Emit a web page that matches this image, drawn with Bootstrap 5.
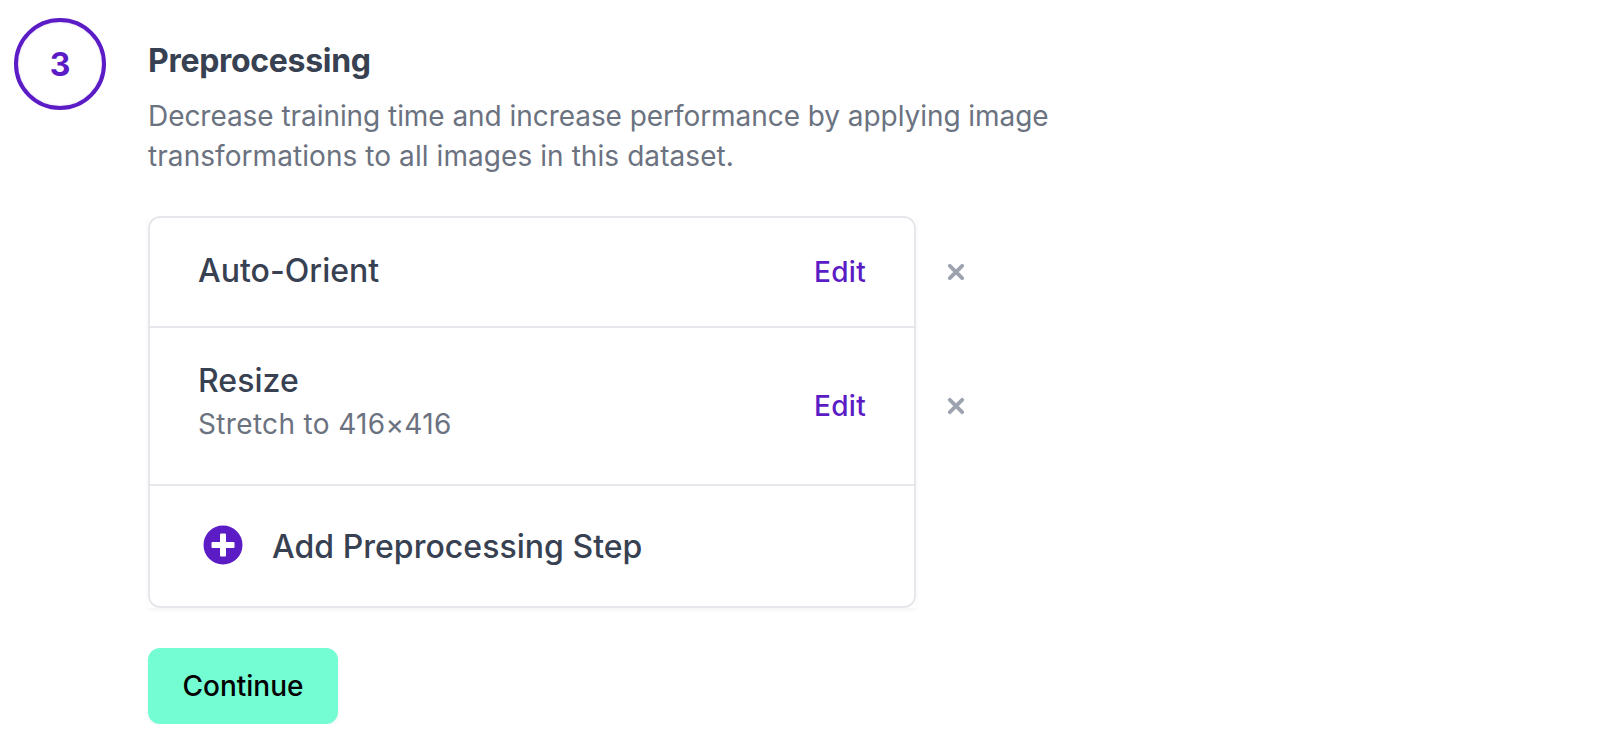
<!DOCTYPE html>
<html lang="en">
<head>
<meta charset="utf-8">
<title>Preprocessing</title>
<link href="https://cdn.jsdelivr.net/npm/bootstrap@5.3.0/dist/css/bootstrap.min.css" rel="stylesheet">
<style>
body{font-family:Inter,"Liberation Sans",sans-serif;background:#fff;color:#374151;overflow:hidden}
.wizard-step{padding:18px 0 0 14px}
.step-number{width:92px;height:92px;border:4px solid #5b1bc5;color:#5b1bc5;font-size:32px;font-weight:700;line-height:1;padding-top:2px;box-shadow:inset 0 0 2px rgba(91,27,197,.25)}
.step-body{width:920px;margin-left:42px;padding-top:23px}
.step-title{font-size:32px;line-height:40px;font-weight:700;margin:0;letter-spacing:-.3px}
.step-help{font-size:28px;line-height:40px;color:#6b7280;margin:15px 0 40px}
.help-first{letter-spacing:-.055px}
.help-second{letter-spacing:.07px}
.step-panel{width:768px;box-shadow:0 2px 4px rgba(0,0,0,.05)}
.step-list{border:2px solid #e5e7eb;border-radius:12px}
.step-row{padding:0 48px;position:relative}
.step-row + .step-row{border-top:2px solid #e5e7eb}
.row-orient{height:108px;padding-bottom:3px}
.row-resize{height:158px}
.row-add{height:122px}
.row-name{font-size:32px;line-height:40px;font-weight:500;letter-spacing:.03px}
.row-add .row-name{padding-top:2px}
.resize-text{padding-bottom:7px}
.row-detail{font-size:28px;line-height:40px;color:#6b7280;letter-spacing:.34px;margin-top:3px}
.edit-link{font-size:28px;line-height:40px;font-weight:500;color:#5b1bc5;text-decoration:none;letter-spacing:.3px}
.row-orient .edit-link{padding-top:2px}
.row-resize .edit-link{padding-bottom:1px}
.remove-btn{position:absolute;left:794px;top:50%;transform:translateY(-50%);line-height:0}
.remove-btn svg{display:block}
.add-icon{margin-bottom:2px}
.continue-btn{width:190px;height:76px;margin-top:40px;border:0;border-radius:12px;background:#74fcd3;color:#000;font-size:28px;font-weight:500;box-shadow:0 2px 4px rgba(0,0,0,.05)}
</style>
</head>
<body>
<main class="wizard-step d-flex align-items-start">
<div class="step-number rounded-circle d-flex align-items-center justify-content-center flex-shrink-0">3</div>
<section class="step-body">
<h2 class="step-title">Preprocessing</h2>
<p class="step-help"><span class="help-first">Decrease training time and increase performance by applying image</span> <span class="help-second">transformations to all images in this dataset.</span></p>
<div class="step-panel">
<div class="step-list">
<div class="step-row row-orient d-flex align-items-center justify-content-between">
<span class="row-name">Auto-Orient</span><a href="#" class="edit-link">Edit</a>
<button class="remove-btn btn p-0 border-0" aria-label="Remove"><svg width="24" height="20" viewBox="0 0 24 20"><path d="M5.8 3.8 18.2 16.2M18.2 3.8 5.8 16.2" stroke="#9ca3af" stroke-width="3.8" stroke-linecap="round"/></svg></button>
</div>
<div class="step-row row-resize d-flex align-items-center justify-content-between">
<div class="resize-text"><div class="row-name">Resize</div><div class="row-detail">Stretch to 416×416</div></div><a href="#" class="edit-link">Edit</a>
<button class="remove-btn btn p-0 border-0" aria-label="Remove"><svg width="24" height="20" viewBox="0 0 24 20"><path d="M5.8 3.8 18.2 16.2M18.2 3.8 5.8 16.2" stroke="#9ca3af" stroke-width="3.8" stroke-linecap="round"/></svg></button>
</div>
<div class="step-row row-add d-flex align-items-center">
<svg class="add-icon" width="50" height="40" viewBox="0 0 50 40"><circle cx="25" cy="20" r="19.5" fill="#5b1bc5"/><g fill="#fff"><rect x="22" y="8.5" width="6" height="23" rx="1"/><rect x="13.5" y="17" width="23" height="6" rx="1"/></g></svg><span class="row-name ms-4">Add Preprocessing Step</span>
</div>
</div>
</div>
<button class="continue-btn btn">Continue</button>
</section>
</main>
<script src="https://cdn.jsdelivr.net/npm/bootstrap@5.3.0/dist/js/bootstrap.bundle.min.js"></script>
</body>
</html>
